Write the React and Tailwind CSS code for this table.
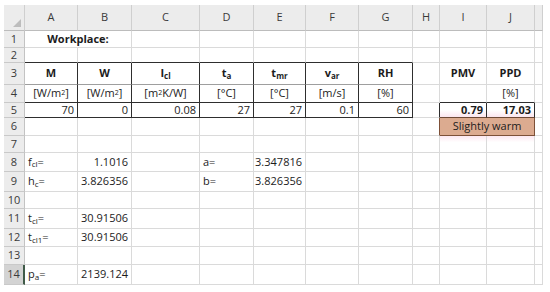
import React from "react";

const base =
  "border-r border-b border-[#dadada] flex items-center px-[3px] overflow-hidden whitespace-nowrap text-[11px] text-[#1c1c1c]";

function C({ children, className = "" }) {
  return <div className={base + " " + className}>{children}</div>;
}

function RH({ n, sel }) {
  return (
    <div
      className={
        "border-b border-[#c9c9c9] flex items-center justify-center text-[11px] text-[#3a3a3a] " +
        (sel
          ? "bg-[#d3d3d3] border-r-2 border-r-[#3f5a48]"
          : "bg-[#ececec] border-r border-r-[#c3c3c3]")
      }
    >
      {n}
    </div>
  );
}

function CH({ children }) {
  return (
    <div className="bg-[#ececec] border-r border-b border-r-[#cfcfcf] border-b-[#bcbcbc] flex items-center justify-center text-[11px] text-[#3a3a3a]">
      {children}
    </div>
  );
}

const sub = (t) => <sub className="text-[8px] align-baseline relative top-[2px]">{t}</sub>;
const sup = (t) => <sup className="text-[7px] relative -top-[1px]">{t}</sup>;

export default function App() {
  const D = "border-r-[#2e2e2e]";
  const DB = "border-b-[#2e2e2e]";
  const MB = "border-b-[#9e9e9e]";
  return (
    <div
      className="w-[550px] h-[292px] bg-white pl-[4px] pt-[5px] overflow-hidden"
      style={{ fontFamily: '"Open Sans", "Liberation Sans", sans-serif' }}
    >
      <div className="grid grid-cols-[21px_53px_54px_68px_54px_52px_53px_54px_27px_47px_48px_8px] grid-rows-[26px_17px_15px_22px_18px_15px_18px_17px_19px_20px_17px_20px_18px_18px_20px] w-[539px]">
        {/* header row */}
        <div className="bg-[#ececec] border-r border-b border-r-[#cfcfcf] border-b-[#bcbcbc] relative">
          <svg className="absolute right-[3px] bottom-[3px]" width="8" height="8" viewBox="0 0 8 8">
            <polygon points="8,0 8,8 0,8" fill="#bdbdbd" />
          </svg>
        </div>
        {["A", "B", "C", "D", "E", "F", "G", "H", "I", "J", ""].map((l, i) => (
          <CH key={i}>{l}</CH>
        ))}

        {/* row 1 */}
        <RH n={1} />
        <C className="col-span-2 justify-center font-bold">Workplace:</C>
        <C /><C /><C /><C /><C /><C /><C /><C /><C />

        {/* row 2 */}
        <RH n={2} />
        <C className={DB} /><C className={DB} /><C className={DB} /><C className={DB} />
        <C className={DB} /><C className={DB} /><C className={DB} />
        <C /><C /><C /><C />

        {/* row 3 */}
        <RH n={3} />
        <C className={`${D} ${MB} justify-center font-bold`}>M</C>
        <C className={`${D} ${MB} justify-center font-bold`}>W</C>
        <C className={`${D} ${MB} justify-center font-bold`}>I{sub("cl")}</C>
        <C className={`${D} ${MB} justify-center font-bold`}>t{sub("a")}</C>
        <C className={`${D} ${MB} justify-center font-bold`}>t{sub("mr")}</C>
        <C className={`${D} ${MB} justify-center font-bold`}>v{sub("ar")}</C>
        <C className={`${D} ${MB} justify-center font-bold`}>RH</C>
        <C />
        <C className="justify-center font-bold">PMV</C>
        <C className="justify-center font-bold">PPD</C>
        <C />

        {/* row 4 */}
        <RH n={4} />
        <C className={`${D} ${DB} justify-center`}>[W/m{sup("2")}]</C>
        <C className={`${D} ${DB} justify-center`}>[W/m{sup("2")}]</C>
        <C className={`${D} ${DB} justify-center`}>[m{sup("2")}K/W]</C>
        <C className={`${D} ${DB} justify-center`}>[°C]</C>
        <C className={`${D} ${DB} justify-center`}>[°C]</C>
        <C className={`${D} ${DB} justify-center`}>[m/s]</C>
        <C className={`${D} ${DB} justify-center`}>[%]</C>
        <C />
        <C className={DB} />
        <C className={`${DB} justify-center`}>[%]</C>
        <C />

        {/* row 5 */}
        <RH n={5} />
        <C className={`${D} ${DB} justify-end`}>70</C>
        <C className={`${D} ${DB} justify-end`}>0</C>
        <C className={`${D} ${DB} justify-end`}>0.08</C>
        <C className={`${D} ${DB} justify-end`}>27</C>
        <C className={`${D} ${DB} justify-end`}>27</C>
        <C className={`${D} ${DB} justify-end`}>0.1</C>
        <C className={`${D} ${DB} justify-end`}>60</C>
        <C className={D} />
        <C className={`${D} border-b-[#6e4a36] justify-end font-bold bg-gradient-to-b from-white from-50% to-[#fbe6ef]`}>0.79</C>
        <C className={`${D} border-b-[#6e4a36] justify-end font-bold bg-gradient-to-b from-white from-50% to-[#fbe6ef]`}>17.03</C>
        <C />

        {/* row 6 */}
        <RH n={6} />
        <C /><C /><C /><C /><C /><C /><C />
        <C className="border-r-[#7d5038]" />
        <C className="col-span-2 justify-center bg-[#dcab90] border-r-[#7d5038] border-b-[#7d5038]">
          Slightly warm
        </C>
        <C />

        {/* row 7 */}
        <RH n={7} />
        <C /><C /><C /><C /><C /><C /><C /><C />
        <C className="bg-gradient-to-b from-[#fde8f1] from-0% to-white to-40%" />
        <C className="bg-gradient-to-b from-[#fde8f1] from-0% to-white to-40%" />
        <C />

        {/* row 8 */}
        <RH n={8} />
        <C>f{sub("cl")}=</C>
        <C className="justify-end">1.1016</C>
        <C />
        <C>a=</C>
        <C className="justify-end">3.347816</C>
        <C /><C /><C /><C /><C /><C />

        {/* row 9 */}
        <RH n={9} />
        <C>h{sub("c")}=</C>
        <C className="justify-end">3.826356</C>
        <C />
        <C>b=</C>
        <C className="justify-end">3.826356</C>
        <C /><C /><C /><C /><C /><C />

        {/* row 10 */}
        <RH n={10} />
        <C /><C /><C /><C /><C /><C /><C /><C /><C /><C /><C />

        {/* row 11 */}
        <RH n={11} />
        <C>t{sub("cl")}=</C>
        <C className="justify-end">30.91506</C>
        <C /><C /><C /><C /><C /><C /><C /><C /><C />

        {/* row 12 */}
        <RH n={12} />
        <C>t{sub("cl1")}=</C>
        <C className="justify-end">30.91506</C>
        <C /><C /><C /><C /><C /><C /><C /><C /><C />

        {/* row 13 */}
        <RH n={13} />
        <C /><C /><C /><C /><C /><C /><C /><C /><C /><C /><C />

        {/* row 14 */}
        <RH n={14} sel />
        <C>p{sub("a")}=</C>
        <C className="justify-end">2139.124</C>
        <C /><C /><C /><C /><C /><C /><C /><C /><C />
      </div>
    </div>
  );
}
